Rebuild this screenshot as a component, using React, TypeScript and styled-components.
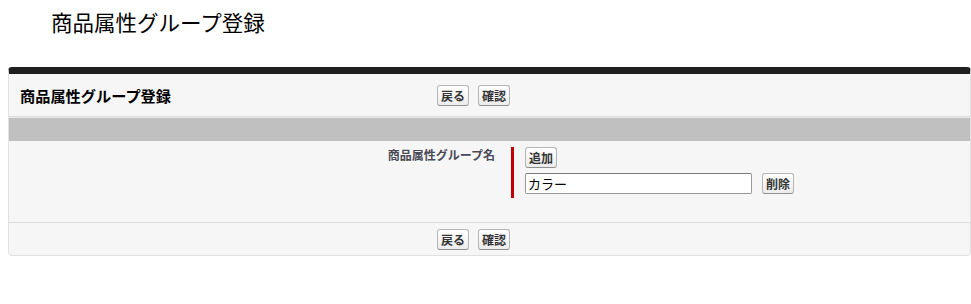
import * as React from 'react';
import styled, { createGlobalStyle } from 'styled-components';

const GlobalStyle = createGlobalStyle`
	html, body {
		margin: 0;
		padding: 0;
		background: #fff;
		font-family: "Noto Sans CJK JP", "Liberation Sans", sans-serif;
		color: #000;
	}
`;

const Page = styled.div`
	padding: 0 0 0 8px;
`;

const PageTitle = styled.h1`
	margin: 0;
	padding: 9px 0 0 43px;
	font-size: 21.5px;
	font-weight: normal;
	line-height: 26px;
	height: 67px;
	box-sizing: border-box;
`;

const Panel = styled.div`
	width: 963px;
	box-sizing: border-box;
	background: #f6f6f6;
	border-top: 7px solid #1f1f1f;
	border-left: 1px solid #e2e2e2;
	border-right: 1px solid #e2e2e2;
	border-bottom: 1px solid #e0e0e0;
	border-radius: 4px;
`;

const Bar = styled.div<{ $top?: boolean }>`
	display: flex;
	align-items: center;
	height: ${(p) => (p.$top ? '42px' : '32px')};
	border-bottom: ${(p) => (p.$top ? '1px solid #dcdcdc' : 'none')};
	border-top: ${(p) => (p.$top ? 'none' : '1px solid #dcdcdc')};
	box-sizing: content-box;
`;

const BarTitle = styled.h2`
	margin: 0;
	width: 428px;
	flex-shrink: 0;
	padding-left: 11px;
	box-sizing: border-box;
	font-size: 15.2px;
	font-weight: bold;
	color: #000;
`;

const ButtonGroup = styled.div`
	display: flex;
	gap: 9px;
`;

const Btn = styled.button`
	font-family: "Noto Sans CJK JP", "Liberation Sans", sans-serif;
	font-size: 12px;
	font-weight: bold;
	line-height: 15px;
	color: #333;
	padding: 2px 3px;
	margin: 0;
	border: 1px solid #b5b5b5;
	border-bottom-color: #8f8f8f;
	border-radius: 3px;
	background: linear-gradient(#ffffff, #ececec);
	cursor: pointer;
`;

const Band = styled.div`
	height: 23px;
	background: #c0c0c0;
	border-top: 1px solid #ececec;
`;

const FormRow = styled.div`
	display: flex;
	min-height: 81px;
`;

const Label = styled.div`
	width: 502px;
	flex-shrink: 0;
	box-sizing: border-box;
	padding: 6px 16px 0 0;
	text-align: right;
	font-size: 12px;
	font-weight: bold;
	color: #4a4a56;
	line-height: 16px;
`;

const Data = styled.div`
	padding-top: 6px;
`;

const Required = styled.div`
	border-left: 3px solid #c00000;
	padding: 0 0 4px 11px;
	display: flex;
	flex-direction: column;
	align-items: flex-start;
	gap: 5px;
`;

const ItemRow = styled.div`
	display: flex;
	align-items: center;
	gap: 10px;
`;

const TextInput = styled.input`
	width: 227px;
	height: 21px;
	box-sizing: border-box;
	border: 1px solid #999;
	border-top-color: #7a7a7a;
	border-radius: 2px;
	padding: 0 2px;
	font-family: "Noto Sans CJK JP", "Liberation Sans", sans-serif;
	font-size: 13px;
	color: #000;
	background: #fff;
`;

const App = () => {
	return (
		<Page>
			<GlobalStyle />
			<PageTitle>商品属性グループ登録</PageTitle>
			<Panel>
				<Bar $top>
					<BarTitle>商品属性グループ登録</BarTitle>
					<ButtonGroup>
						<Btn>戻る</Btn>
						<Btn>確認</Btn>
					</ButtonGroup>
				</Bar>
				<Band />
				<FormRow>
					<Label>商品属性グループ名</Label>
					<Data>
						<Required>
							<Btn>追加</Btn>
							<ItemRow>
								<TextInput defaultValue="カラー" />
								<Btn>削除</Btn>
							</ItemRow>
						</Required>
					</Data>
				</FormRow>
				<Bar>
					<BarTitle />
					<ButtonGroup>
						<Btn>戻る</Btn>
						<Btn>確認</Btn>
					</ButtonGroup>
				</Bar>
			</Panel>
		</Page>
	);
};

export default App;
